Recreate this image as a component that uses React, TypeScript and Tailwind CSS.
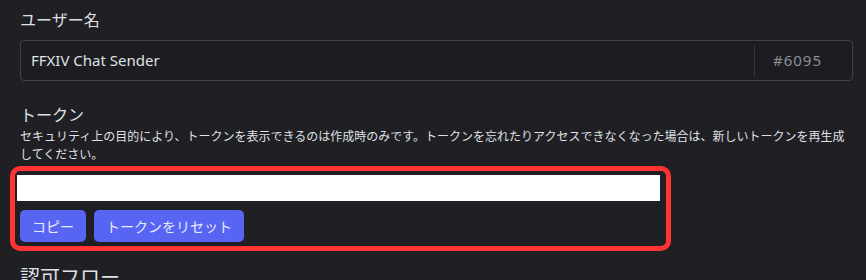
export default function App() {
  return (
    <div
      className="h-[280px] w-[866px] overflow-hidden bg-[#1f1f24] px-[20px] pt-[10px] text-[#dfe1e5]"
      style={{ fontFamily: '"Noto Sans", "Noto Sans CJK JP", sans-serif' }}
    >
      <div className="w-[833px]">
        <h3 className="text-[16px] leading-[20px]">ユーザー名</h3>
        <div className="mt-[10px] flex h-[41px] items-center rounded-[4px] border border-[#414148] bg-[#1d1d21]">
          <span className="flex-1 pl-[10px] text-[15px] text-[#dfe1e5]">FFXIV Chat Sender</span>
          <div className="h-[30px] w-px bg-[#38383e]" />
          <span className="ml-[18px] mr-[30px] text-[15px] tracking-[1px] text-[#8e9096]">#6095</span>
        </div>

        <h3 className="mt-[24px] text-[16px] leading-[20px]">トークン</h3>
        <p className="mt-[3px] text-[12px] leading-[18px] text-[#dfe1e5]">
          セキュリティ上の目的により、トークンを表示できるのは作成時のみです。トークンを忘れたりアクセスできなくなった場合は、新しいトークンを再生成してください。
        </p>

        <div className="-ml-[10px] mt-[2px] w-[661px] rounded-[10px] border-[5px] border-[#ff3333] pb-[4px] pl-[2px] pr-[6px] pt-[4px]">
          <div className="h-[26px] w-full bg-white" />
          <div className="ml-[3px] mt-[9px] flex gap-[8px]">
            <button className="h-[32px] rounded-[5px] bg-[#5865f2] px-[12px] text-[14px] text-[#e8eaff]">
              コピー
            </button>
            <button className="h-[32px] rounded-[5px] bg-[#5865f2] px-[12px] text-[14px] text-[#e8eaff]">
              トークンをリセット
            </button>
          </div>
        </div>

        <h2 className="mt-[15px] text-[20px] leading-[24px]">認可フロー</h2>
      </div>
    </div>
  )
}
